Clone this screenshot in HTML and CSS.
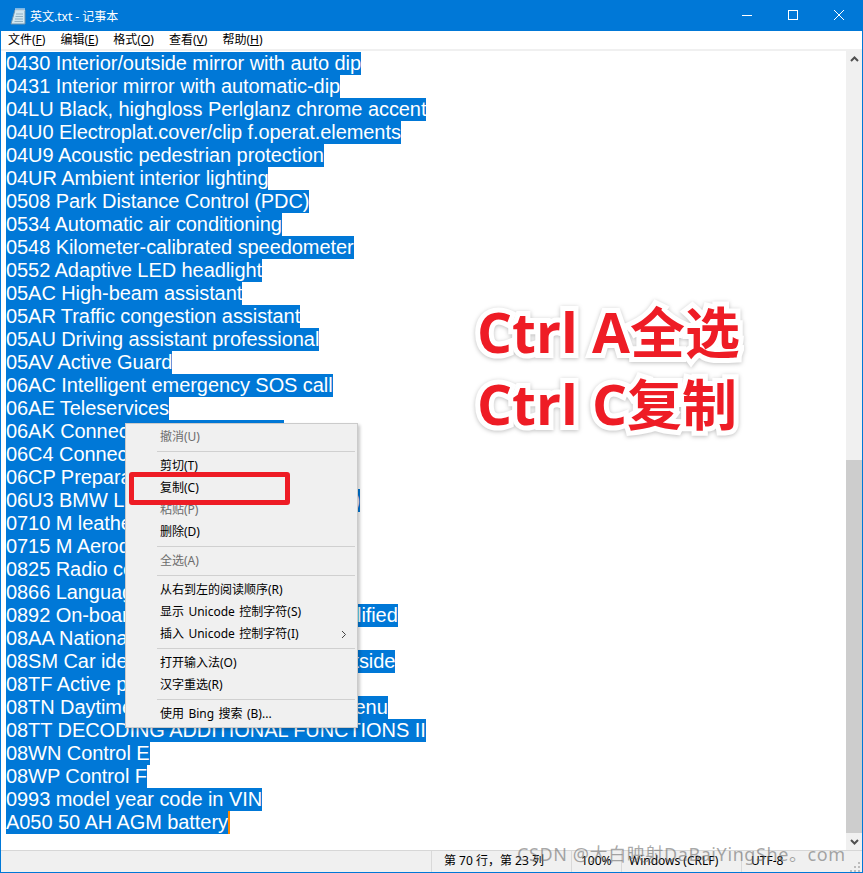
FILE: index.html
```html
<!DOCTYPE html>
<html lang="zh-CN">
<head>
<meta charset="utf-8">
<title>英文.txt - 记事本</title>
<link rel="stylesheet" href="styles.css">
</head>
<body>
<div class="window">
  <header class="titlebar">
    <svg class="app-icon" width="16" height="18" viewBox="0 0 16 18"><path d="M5 3h10v14H1z" fill="#cfe6f0" stroke="#6f93ad"/><path d="M6 7h7M5.500 9.500h7.500M5 12h8M4.500 14.500h8.500" stroke="#8fb0c4"/><path d="M6 1v3M8 1v3M10 1v3M12 1v3M14 1v3" stroke="#f2f6f8"/></svg>
    <span class="title">英文.txt - 记事本</span>
    <div class="controls">
      <svg class="ctl" width="46" height="31" viewBox="0 0 46 31"><path d="M18 15.500h10" stroke="#fff"/></svg>
      <svg class="ctl" width="46" height="31" viewBox="0 0 46 31"><rect x="18.500" y="10.500" width="9" height="9" fill="none" stroke="#fff"/></svg>
      <svg class="ctl" width="46" height="31" viewBox="0 0 46 31"><path d="M18 10l10 10M28 10l-10 10" stroke="#fff"/></svg>
    </div>
  </header>
  <nav class="menubar">
    <span class="mi">文件(<u>F</u>)</span>
    <span class="mi">编辑(<u>E</u>)</span>
    <span class="mi">格式(<u>O</u>)</span>
    <span class="mi">查看(<u>V</u>)</span>
    <span class="mi">帮助(<u>H</u>)</span>
  </nav>
  <div class="body">
    <main class="editor">
      <div class="ln"><span>0430 Interior/outside mirror with auto dip</span></div>
      <div class="ln"><span>0431 Interior mirror with automatic-dip</span></div>
      <div class="ln"><span>04LU Black, highgloss Perlglanz chrome accent</span></div>
      <div class="ln"><span>04U0 Electroplat.cover/clip f.operat.elements</span></div>
      <div class="ln"><span>04U9 Acoustic pedestrian protection</span></div>
      <div class="ln"><span>04UR Ambient interior lighting</span></div>
      <div class="ln"><span>0508 Park Distance Control (PDC)</span></div>
      <div class="ln"><span>0534 Automatic air conditioning</span></div>
      <div class="ln"><span>0548 Kilometer-calibrated speedometer</span></div>
      <div class="ln"><span>0552 Adaptive LED headlight</span></div>
      <div class="ln"><span>05AC High-beam assistant</span></div>
      <div class="ln"><span>05AR Traffic congestion assistant</span></div>
      <div class="ln"><span>05AU Driving assistant professional</span></div>
      <div class="ln"><span>05AV Active Guard</span></div>
      <div class="ln"><span>06AC Intelligent emergency SOS call</span></div>
      <div class="ln"><span>06AE Teleservices</span></div>
      <div class="ln"><span>06AK ConnectedDrive Services</span></div>
      <div class="ln"><span>06C4 Connected Package</span></div>
      <div class="ln"><span>06CP Preparation Apple</span></div>
      <div class="ln"><span>06U3 BMW Live Cockpit Professional (I)</span></div>
      <div class="ln"><span>0710 M leather wheel</span></div>
      <div class="ln"><span>0715 M Aerodynamics</span></div>
      <div class="ln"><span>0825 Radio control</span></div>
      <div class="ln"><span>0866 Language setting</span></div>
      <div class="ln"><span>0892 On-board manual in Chinese simplified</span></div>
      <div class="ln"><span>08AA National version</span></div>
      <div class="ln"><span>08SM Car identification markings for outside</span></div>
      <div class="ln"><span>08TF Active protection</span></div>
      <div class="ln"><span>08TN Daytime running light control in menu</span></div>
      <div class="ln"><span>08TT DECODING ADDITIONAL FUNCTIONS II</span></div>
      <div class="ln"><span>08WN Control E</span></div>
      <div class="ln"><span>08WP Control F</span></div>
      <div class="ln"><span>0993 model year code in VIN</span></div>
      <div class="ln"><span>A050 50 AH AGM battery</span><i class="caret"></i></div>
    </main>
    <aside class="scrollbar">
      <svg class="arrow" width="17" height="17" viewBox="0 0 17 17"><path d="M5 10l3.500-3.500L12 10" fill="none" stroke="#505050" stroke-width="2"/></svg>
      <div class="track"><div class="thumb"></div></div>
      <svg class="arrow" width="17" height="17" viewBox="0 0 17 17"><path d="M5 7l3.500 3.500L12 7" fill="none" stroke="#505050" stroke-width="2"/></svg>
    </aside>
  </div>
  <footer class="status">
    <span class="cell c-pos">第 70 行，第 23 列</span>
    <span class="cell c-zoom">100%</span>
    <span class="cell c-eol">Windows (CRLF)</span>
    <span class="cell c-enc">UTF-8</span>
    <svg class="grip" width="12" height="12" viewBox="0 0 12 12"><path d="M9 2h2v2H9zM5 6h2v2H5zM9 6h2v2H9zM1 10h2v2H1zM5 10h2v2H5zM9 10h2v2H9z" fill="#bdbdbd"/></svg>
  </footer>
</div>

<div class="ctx">
  <div class="ci off">撤消(U)</div>
  <div class="sep"></div>
  <div class="ci">剪切(T)</div>
  <div class="ci">复制(C)</div>
  <div class="ci off">粘贴(P)</div>
  <div class="ci">删除(D)</div>
  <div class="sep"></div>
  <div class="ci off">全选(A)</div>
  <div class="sep"></div>
  <div class="ci">从右到左的阅读顺序(R)</div>
  <div class="ci">显示 Unicode 控制字符(S)</div>
  <div class="ci">插入 Unicode 控制字符(I)<svg class="sub" width="6" height="9" viewBox="0 0 6 9"><path d="M1 1l3.500 3.500L1 8" fill="none" stroke="#444"/></svg></div>
  <div class="sep"></div>
  <div class="ci">打开输入法(O)</div>
  <div class="ci">汉字重选(R)</div>
  <div class="sep"></div>
  <div class="ci">使用 Bing 搜索 (B)...</div>
</div>
<div class="redbox"></div>
<div class="callout">
  <div class="cl">Ctrl A全选</div>
  <div class="cl">Ctrl C复制</div>
</div>
<div class="watermark">CSDN @大白映射DaBaiYingShe。com</div>
</body>
</html>
```
FILE: styles.css
```css
* { box-sizing: border-box; }
html, body { margin: 0; height: 100%; overflow: hidden; background: #fff; }
body { font-family: "Noto Sans", "Noto Sans CJK SC", sans-serif; font-size: 12px; color: #000; }

.window { display: flex; flex-direction: column; width: 863px; height: 873px; border: 1px solid #0078d7; border-top: 0; }

.titlebar { flex: none; height: 31px; background: #0078d7; color: #fff; display: flex; align-items: center; padding-left: 9px; }
.app-icon { flex: none; }
.title { margin-left: 4px; font-size: 12px; }
.controls { margin-left: auto; display: flex; }
.ctl { display: block; }

.menubar { flex: none; height: 20px; background: #fff; border-bottom: 2px solid #f0f0f0; display: flex; align-items: center; padding-left: 7px; gap: 15px; font-size: 12px; line-height: 18px; }
.mi { white-space: nowrap; }
.mi u { text-underline-offset: 1px; }

.body { flex: 1; min-height: 0; display: flex; }
.editor { flex: 1; min-width: 0; padding: 1px 0 0 5px; background: #fff; font-family: "Liberation Sans", Arial, sans-serif; font-size: 20px; letter-spacing: -0.07px; overflow: hidden; }
.ln { height: 23px; line-height: 23px; white-space: nowrap; display: flex; }
.ln span { background: #0078d7; color: #fff; display: block; height: 23px; }
.caret { display: block; width: 2px; height: 23px; background: #ff8800; }

.scrollbar { flex: none; width: 16px; background: #f0f0f0; display: flex; flex-direction: column; }
.arrow { display: block; flex: none; }
.track { flex: 1; display: flex; flex-direction: column; justify-content: flex-end; }
.thumb { height: 373px; background: #cdcdcd; }

.status { flex: none; height: 22px; background: #f0f0f0; border-top: 1px solid #d7d7d7; display: flex; align-items: center; position: relative; font-size: 12px; line-height: 20px; }
.cell { display: block; height: 100%; white-space: nowrap; border-left: 1px solid #d9d9d9; }
.c-pos { margin-left: 430px; width: 140px; padding-left: 12px; }
.c-zoom { width: 50px; padding-left: 9px; }
.c-eol { width: 120px; padding-left: 7px; }
.c-enc { flex: 1; padding-left: 9px; }
.grip { position: absolute; right: 1px; bottom: 0; }

.ctx { position: absolute; left: 125px; top: 423px; width: 233px; height: 305px; padding: 2px; background: #f0f0f0; border: 1px solid #cbcbcb; box-shadow: 2px 2px 3px rgba(0,0,0,.22); }
.ci { position: relative; height: 22px; line-height: 22px; padding-left: 32px; white-space: nowrap; color: #000; word-spacing: 1.300px; }
.ci.off { color: #6d6d6d; }
.sep { height: 1px; margin: 3px 0 3px 29px; background: #d0d0d0; }
.sub { position: absolute; right: 8px; top: 7px; }

.redbox { position: absolute; left: 129px; top: 472px; width: 161px; height: 33px; border: 5px solid #ee1c25; border-radius: 3px; }

.callout { position: absolute; left: 477px; top: 296px; font-family: "Open Sans", "Noto Sans CJK SC", sans-serif; font-weight: 700; font-size: 55px; line-height: 72px; color: #ee1c25; white-space: nowrap; filter: drop-shadow(0 1px 2px rgba(0,0,0,.25)); }
.cl { -webkit-text-stroke: 10px #fff; paint-order: stroke fill; }

.watermark { position: absolute; left: 517px; top: 842px; font-family: "Noto Sans", "Noto Sans CJK SC", sans-serif; font-size: 18px; letter-spacing: 0.600px; line-height: 24px; color: rgba(110,110,110,.6); white-space: nowrap; }
```
